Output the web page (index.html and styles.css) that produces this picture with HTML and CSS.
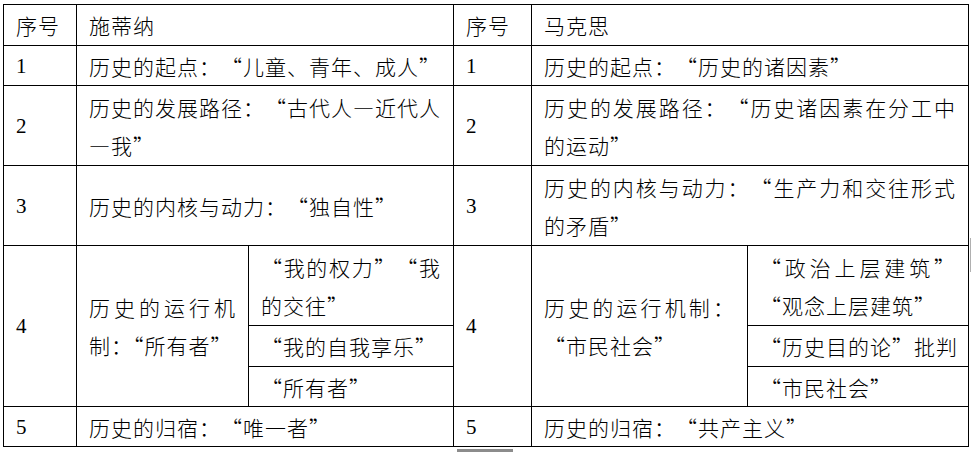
FILE: index.html
```html
<!DOCTYPE html>
<html lang="zh-CN">
<head>
<meta charset="utf-8">
<title>施蒂纳与马克思</title>
<link rel="stylesheet" href="styles.css">
</head>
<body>
<table class="cmp">
  <colgroup>
    <col class="c-num1">
    <col class="c-a1">
    <col class="c-b1">
    <col class="c-num2">
    <col class="c-a2">
    <col class="c-b2">
  </colgroup>
  <tr class="r-head">
    <td class="txt">序号</td>
    <td class="txt" colspan="2">施蒂纳</td>
    <td class="txt">序号</td>
    <td class="txt" colspan="2">马克思</td>
  </tr>
  <tr class="r-one">
    <td class="num">1</td>
    <td class="txt" colspan="2">历史的起点：“儿童、青年、成人”</td>
    <td class="num">1</td>
    <td class="txt" colspan="2">历史的起点：“历史的诸因素”</td>
  </tr>
  <tr class="r-two">
    <td class="num">2</td>
    <td class="txt" colspan="2">历史的发展路径：“古代人—近代人—我”</td>
    <td class="num">2</td>
    <td class="txt" colspan="2">历史的发展路径：“历史诸因素在分工中的运动”</td>
  </tr>
  <tr class="r-two">
    <td class="num">3</td>
    <td class="txt" colspan="2">历史的内核与动力：“独自性”</td>
    <td class="num">3</td>
    <td class="txt" colspan="2">历史的内核与动力：“生产力和交往形式的矛盾”</td>
  </tr>
  <tr class="r-two">
    <td class="num" rowspan="3">4</td>
    <td class="txt tight" rowspan="3">历史的运行机制：“所有者”</td>
    <td class="txt">“我的权力”“我的交往”</td>
    <td class="num" rowspan="3">4</td>
    <td class="txt" rowspan="3">历史的运行机制：“市民社会”</td>
    <td class="txt">“政治上层建筑”“观念上层建筑”</td>
  </tr>
  <tr class="r-head">
    <td class="txt">“我的自我享乐”</td>
    <td class="txt nowrap">“历史目的论”批判</td>
  </tr>
  <tr class="r-one">
    <td class="txt">“所有者”</td>
    <td class="txt">“市民社会”</td>
  </tr>
  <tr class="r-one">
    <td class="num">5</td>
    <td class="txt" colspan="2">历史的归宿：“唯一者”</td>
    <td class="num">5</td>
    <td class="txt" colspan="2">历史的归宿：“共产主义”</td>
  </tr>
</table>
<div class="mark-bottom"></div>
<div class="mark-right"></div>
</body>
</html>
```
FILE: styles.css
```css
html, body {
  margin: 0;
  padding: 0;
  background: #ffffff;
}

body {
  position: relative;
  width: 972px;
  height: 452px;
  overflow: hidden;
}

.cmp {
  border-collapse: collapse;
  table-layout: fixed;
  width: 965px;
  margin: 4px 0 0 3px;
  color: #000;
}

.c-num1 { width: 73px; }
.c-a1 { width: 172px; }
.c-b1 { width: 205px; }
.c-num2 { width: 78px; }
.c-a2 { width: 216px; }
.c-b2 { width: 221px; }

.cmp td {
  border: 1px solid #000;
  padding: 0 12px;
  vertical-align: middle;
  line-height: 38px;
  font-size: 21px;
}

.r-head { height: 41px; }
.r-one { height: 40px; }
.r-two { height: 80px; }

.num {
  font-family: "Liberation Serif", "Noto Sans CJK SC", serif;
}

.txt {
  font-family: "Noto Sans CJK SC", "Liberation Serif", sans-serif;
  letter-spacing: 1px;
  text-align: justify;
  text-spacing-trim: space-all;
  font-weight: 300;
}

.cmp td.tight {
  text-spacing-trim: normal;
}

.nowrap {
  white-space: nowrap;
}

.mark-bottom {
  position: absolute;
  left: 457px;
  top: 449px;
  width: 56px;
  height: 3px;
  background: #8c8c8c;
}

.mark-right {
  position: absolute;
  left: 970px;
  top: 238px;
  width: 1px;
  height: 34px;
  background: #b0b0b0;
}
```
